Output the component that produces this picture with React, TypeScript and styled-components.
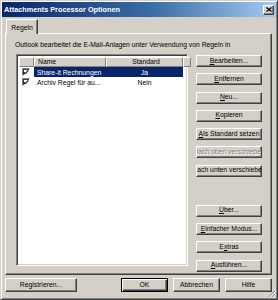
import { FC, ReactNode } from "react";
import styled, { createGlobalStyle } from "styled-components";

const GlobalStyle = createGlobalStyle`
    html, body {
        margin: 0;
        padding: 0;
        background: #d4d0c8;
    }
    * {
        box-sizing: border-box;
    }
`;

const StyledWindow = styled.div`
    width: 278px;
    height: 300px;
    background: #d4d0c8;
    border: 1px solid;
    border-color: #d4d0c8 #404040 #404040 #d4d0c8;
    box-shadow: inset 1px 1px 0 #ffffff, inset -1px -1px 0 #808080;
    padding: 1px;
    display: flex;
    flex-direction: column;
    font-family: "Liberation Sans", Arial, sans-serif;
    font-size: 6.8px;
    color: #000;
    position: relative;
    overflow: hidden;
`;

const StyledTitleBar = styled.div`
    height: 15px;
    display: flex;
    align-items: center;
    justify-content: space-between;
    padding: 0 2px 0 2px;
    background: linear-gradient(to right, #0a246a 0%, #3a6ea5 55%, #a6caf0 100%);
    color: #ffffff;
    font-weight: bold;
    font-size: 7.3px;
`;

const StyledCloseButton = styled.div`
    width: 11px;
    height: 10px;
    background: #d4d0c8;
    border: 1px solid;
    border-color: #ffffff #404040 #404040 #ffffff;
    box-shadow: inset -1px -1px 0 #808080;
    display: flex;
    align-items: center;
    justify-content: center;
`;

const StyledBody = styled.div`
    flex: 1;
    display: flex;
    flex-direction: column;
    padding: 1px 4px 0 3px;
`;

const StyledTabStrip = styled.div`
    display: flex;
    padding-left: 1px;
    height: 15px;
    align-items: flex-end;
`;

const StyledTab = styled.div`
    height: 15px;
    width: 32px;
    background: #d4d0c8;
    border: 1px solid;
    border-bottom: none;
    border-color: #ffffff #404040 transparent #ffffff;
    box-shadow: inset -1px 0 0 #808080;
    display: flex;
    align-items: center;
    justify-content: center;
    margin-bottom: -1px;
    position: relative;
    z-index: 1;
`;

const StyledTabPanel = styled.div`
    height: 242px;
    border: 1px solid;
    border-color: #ffffff #404040 #404040 #ffffff;
    box-shadow: inset -1px -1px 0 #808080;
    padding: 6px 8px 0 9px;
    display: flex;
    flex-direction: column;
`;

const StyledLabel = styled.div`
    height: 14px;
    line-height: 10px;
    white-space: nowrap;
`;

const StyledPanelContent = styled.div`
    display: flex;
    gap: 8px;
`;

const StyledList = styled.div`
    margin-left: 1px;
    width: 172px;
    height: 212px;
    background: #ffffff;
    border: 1px solid;
    border-color: #808080 #ffffff #ffffff #808080;
    box-shadow: inset 1px 1px 0 #404040, inset -1px -1px 0 #d4d0c8;
    padding: 2px;
    display: flex;
    flex-direction: column;
`;

const StyledHeaderRow = styled.div`
    display: flex;
    height: 10px;
`;

const StyledHeaderCell = styled.div<{ $width: number; $align?: string }>`
    width: ${p => p.$width}px;
    flex: none;
    height: 10px;
    background: #d4d0c8;
    border: 1px solid;
    border-color: #ffffff #808080 #808080 #ffffff;
    display: flex;
    align-items: center;
    justify-content: ${p => p.$align ?? "flex-start"};
    padding-left: 3px;
    line-height: 1;
`;

const StyledRow = styled.div`
    display: flex;
    height: 10px;
    align-items: center;
`;

const StyledCheckCell = styled.div`
    width: 15px;
    flex: none;
    display: flex;
    align-items: center;
    padding-left: 3px;
`;

const StyledCheckbox = styled.div`
    width: 8px;
    height: 8px;
    border: 1px solid;
    border-color: #808080 #ffffff #ffffff #808080;
    box-shadow: inset 1px 1px 0 #404040;
    background: #ffffff;
    display: flex;
    align-items: center;
    justify-content: center;
`;

const StyledCell = styled.div<{ $width: number; $selected?: boolean; $center?: boolean }>`
    width: ${p => p.$width}px;
    flex: none;
    height: 10px;
    display: flex;
    align-items: center;
    justify-content: ${p => (p.$center ? "center" : "flex-start")};
    padding-left: ${p => (p.$center ? 0 : 3)}px;
    background: ${p => (p.$selected ? "#0a246a" : "transparent")};
    color: ${p => (p.$selected ? "#ffffff" : "#000000")};
    white-space: nowrap;
    overflow: hidden;
`;

const StyledButtonColumn = styled.div`
    display: flex;
    flex-direction: column;
    gap: 6.3px;
    padding-top: 1px;
`;

const StyledButton = styled.div<{ $width?: number; $disabled?: boolean; $default?: boolean }>`
    width: ${p => p.$width ?? 66}px;
    height: ${p => (p.$width ? 14 : 12)}px;
    flex: none;
    background: #d4d0c8;
    border: 1px solid;
    border-color: ${p => (p.$default ? "#000000" : "#ffffff #404040 #404040 #ffffff")};
    box-shadow: ${p => (p.$default
        ? "inset 1px 1px 0 #ffffff, inset -1px -1px 0 #404040, inset -2px -2px 0 #808080"
        : "inset -1px -1px 0 #808080")};
    display: flex;
    align-items: center;
    justify-content: center;
    white-space: nowrap;
    overflow: hidden;
    color: ${p => (p.$disabled ? "#808080" : "#000000")};
    text-shadow: ${p => (p.$disabled ? "1px 1px 0 #ffffff" : "none")};
    line-height: 1;
`;

const StyledSpacer = styled.div`
    height: 15.5px;
`;

const StyledFooter = styled.div`
    display: flex;
    align-items: center;
    padding-top: 3px;
    gap: 5px;
`;

const StyledFooterGap = styled.div`
    flex: 1;
`;

const StyledGrip = styled.svg`
    position: absolute;
    right: 1px;
    bottom: 1px;
`;

const Check: FC = () => (
    <svg width="6" height="6" viewBox="0 0 7 7">
        <path d="M0.5 3 L2.5 5 L6.5 1 M0.5 4 L2.5 6 L6.5 2" stroke="#000" strokeWidth="1" fill="none" />
    </svg>
);

const Btn: FC<{ children: ReactNode; disabled?: boolean }> = ({ children, disabled }) => (
    <StyledButton $disabled={disabled}>{children}</StyledButton>
);

export default function App() {
    return <>
        <GlobalStyle />
        <StyledWindow>
            <StyledTitleBar>
                <span>Attachments Processor Optionen</span>
                <StyledCloseButton>
                    <svg width="6" height="5" viewBox="0 0 6 5">
                        <path d="M0.5 0.5 L5.5 4.5 M5.5 0.5 L0.5 4.5" stroke="#000" strokeWidth="1.2" />
                    </svg>
                </StyledCloseButton>
            </StyledTitleBar>

            <StyledBody>
                <StyledTabStrip>
                    <StyledTab>Regeln</StyledTab>
                </StyledTabStrip>
                <StyledTabPanel>
                    <StyledLabel>Outlook bearbeitet die E-Mail-Anlagen unter Verwendung von Regeln in</StyledLabel>
                    <StyledPanelContent>
                        <StyledList>
                            <StyledHeaderRow>
                                <StyledHeaderCell $width={15} />
                                <StyledHeaderCell $width={72}>Name</StyledHeaderCell>
                                <StyledHeaderCell $width={77} $align="center">Standard</StyledHeaderCell>
                                <StyledHeaderCell $width={8} />
                            </StyledHeaderRow>
                            <StyledRow>
                                <StyledCheckCell><StyledCheckbox><Check /></StyledCheckbox></StyledCheckCell>
                                <StyledCell $width={72} $selected>Share-it Rechnungen</StyledCell>
                                <StyledCell $width={77} $selected $center>Ja</StyledCell>
                            </StyledRow>
                            <StyledRow>
                                <StyledCheckCell><StyledCheckbox><Check /></StyledCheckbox></StyledCheckCell>
                                <StyledCell $width={72}>Archiv Regel für au...</StyledCell>
                                <StyledCell $width={77} $center>Nein</StyledCell>
                            </StyledRow>
                        </StyledList>

                        <StyledButtonColumn>
                            <Btn><u>B</u>earbeiten...</Btn>
                            <Btn><u>E</u>ntfernen</Btn>
                            <Btn><u>N</u>eu...</Btn>
                            <Btn><u>K</u>opieren</Btn>
                            <Btn><u>A</u>ls Standard setzen</Btn>
                            <Btn disabled>Nach oben verschieben</Btn>
                            <Btn>Nach unten verschieben</Btn>
                            <StyledSpacer />
                            <Btn><u>Ü</u>ber...</Btn>
                            <Btn><u>E</u>infacher Modus...</Btn>
                            <Btn>E<u>x</u>tras</Btn>
                            <Btn><u>A</u>usführen...</Btn>
                        </StyledButtonColumn>
                    </StyledPanelContent>
                </StyledTabPanel>

                <StyledFooter>
                    <StyledButton $width={72}>Registrieren...</StyledButton>
                    <StyledFooterGap />
                    <StyledButton $width={47} $default>OK</StyledButton>
                    <StyledButton $width={47}>Abbrechen</StyledButton>
                    <StyledButton $width={47}>Hilfe</StyledButton>
                </StyledFooter>
            </StyledBody>

            <StyledGrip width="8" height="8" viewBox="0 0 8 8">
                <path d="M7 1 L1 7 M7 4 L4 7" stroke="#808080" strokeWidth="1" />
                <path d="M8 1 L1 8 M8 4 L4 8" stroke="#ffffff" strokeWidth="1" />
            </StyledGrip>
        </StyledWindow>
    </>;
}
